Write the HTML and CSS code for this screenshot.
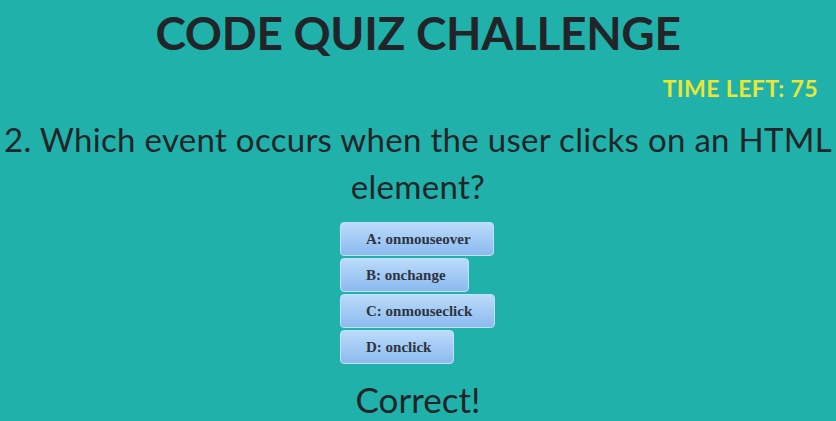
FILE: index.html
```html
<!DOCTYPE html>
<html>
<head>
<meta charset="utf-8">
<link rel="stylesheet" href="styles.css">
</head>
<body>
<header class="title">CODE QUIZ CHALLENGE</header>
<div class="timer">TIME LEFT: 75</div>
<main class="quiz">
  <h2 class="question">2. Which event occurs when the user clicks on an HTML element?</h2>
  <div class="answers">
    <button class="answer">A: onmouseover</button>
    <button class="answer">B: onchange</button>
    <button class="answer">C: onmouseclick</button>
    <button class="answer">D: onclick</button>
  </div>
  <p class="result">Correct!</p>
</main>
</body>
</html>
```
FILE: styles.css
```css
html, body {
  margin: 0;
  padding: 0;
  background: #20b2aa;
  color: #212529;
  height: 100%;
  overflow: hidden;
}
.title {
  font-family: "Lato", "Open Sans", sans-serif;
  font-weight: 700;
  font-size: 46px;
  text-align: center;
  letter-spacing: -0.3px;
  line-height: 58px;
  padding-top: 4px;
}
.timer {
  font-family: "Lato", sans-serif;
  font-weight: 700;
  font-size: 23px;
  letter-spacing: 0.4px;
  color: #ebe534;
  text-align: right;
  padding-right: 18px;
  line-height: 26px;
  margin-top: 13px;
}
.quiz {
  display: flex;
  flex-direction: column;
  align-items: center;
}
.question {
  font-family: "Lato", sans-serif;
  font-weight: 400;
  font-size: 33px;
  letter-spacing: 0.3px;
  line-height: 47px;
  text-align: center;
  margin: 15px 0 12px;
  padding: 0 2px;
}
.answers {
  display: flex;
  flex-direction: column;
  align-items: flex-start;
  gap: 2px;
  width: 156px;
}
.answer {
  font-family: "Liberation Serif", serif;
  font-weight: 700;
  font-size: 15px;
  color: #2e3440;
  height: 34px;
  padding: 0 22px 0 25px;
  border: 1px solid #c2e0fa;
  border-radius: 4px;
  background: linear-gradient(#bbdbfa, #8bbaef);
  text-align: left;
}
.result {
  font-family: "Lato", sans-serif;
  font-size: 35px;
  margin: 9px 0 0;
  line-height: 52px;
}
```
